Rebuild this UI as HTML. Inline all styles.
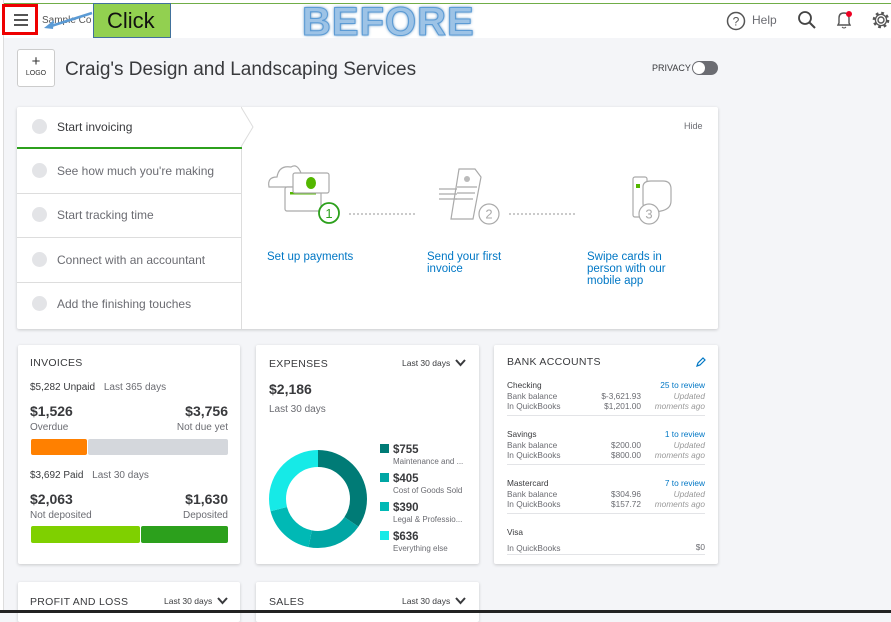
<!DOCTYPE html>
<html><head><meta charset="utf-8"><style>
*{box-sizing:border-box;margin:0;padding:0}
body{width:891px;height:613px;overflow:hidden;background:#f4f5f8;font-family:"Liberation Sans",sans-serif;color:#393a3d;position:relative}
.abs{position:absolute}
.card{position:absolute;background:#fff;box-shadow:0 1px 3px rgba(0,0,0,.18);border-radius:2px}
.lnk{color:#0077c5}
.g{color:#6b6c72}
.row{position:relative;height:36px;border-bottom:1px solid #e3e4e7;margin-bottom:13px}
</style></head><body>
<div class="abs" style="left:0;top:0;width:891px;height:38px;background:#fff"></div>
<div class="abs" style="left:0;top:3px;width:891px;height:1px;background:#70ad47"></div>
<div class="abs" style="left:0;top:0;width:4px;height:613px;background:#fff;border-right:1px solid #ddd"></div>
<!-- hamburger -->
<div class="abs" style="left:2px;top:4px;width:36px;height:31px;border:3px solid #e00"></div>
<div class="abs" style="left:14px;top:14px;width:14px;height:2px;background:#555;box-shadow:0 5px 0 #555,0 10px 0 #555"></div>
<div class="abs" style="left:42px;top:15px;font-size:10px;color:#555">Sample Co</div>
<svg class="abs" style="left:40px;top:10px" width="55" height="20"><path d="M52 3 L8 17" stroke="#5b9bd5" stroke-width="2.5"/><path d="M4 18 L14 10 L13 19Z" fill="#5b9bd5"/></svg>
<div class="abs" style="left:93px;top:3px;width:78px;height:35px;background:#92d050;border:1px solid #41719c;font-size:22px;color:#111;padding:4px 0 0 13px">Click</div>
<div class="abs" style="left:302px;top:0px;font-size:40px;font-weight:bold;color:#9dc3e6;letter-spacing:1px;text-shadow:0 0 3px #2e75b6,0 0 1px #2e75b6;-webkit-text-stroke:1px #5b9bd5">BEFORE</div>
<!-- top right icons -->
<svg class="abs" style="left:726px;top:11px" width="20" height="20"><circle cx="10" cy="10" r="8.5" stroke="#555" stroke-width="1.5" fill="none"/><text x="10" y="14.5" font-size="12" text-anchor="middle" fill="#555" font-family="Liberation Sans">?</text></svg>
<div class="abs" style="left:752px;top:13px;font-size:12px;color:#6b6c72">Help</div>
<svg class="abs" style="left:797px;top:10px" width="20" height="20"><circle cx="8" cy="8" r="6" stroke="#444" stroke-width="1.8" fill="none"/><path d="M12.5 12.5 L18 18" stroke="#444" stroke-width="2"/></svg>
<svg class="abs" style="left:834px;top:9px" width="20" height="22"><path d="M4 16 L5 14 L5 9 Q5 4 10 4 Q15 4 15 9 L15 14 L16 16Z" stroke="#555" stroke-width="1.4" fill="none"/><path d="M8 18 Q10 20 12 18" stroke="#555" fill="none"/><circle cx="15" cy="5" r="3" fill="#e02"/></svg>
<svg class="abs" style="left:871px;top:10px" width="20" height="20"><circle cx="10" cy="10" r="3" stroke="#555" stroke-width="1.4" fill="none"/><circle cx="10" cy="10" r="7" stroke="#555" stroke-width="2.6" fill="none" stroke-dasharray="2.7 2.8"/><circle cx="10" cy="10" r="5.6" stroke="#555" stroke-width="1.3" fill="none"/></svg>
<!-- company header -->
<div class="abs" style="left:17px;top:49px;width:38px;height:38px;border:1px solid #ccc;border-radius:3px;background:#fff;text-align:center;font-size:15px;line-height:14px;padding-top:5px;color:#333">+<div style="font-size:7px;line-height:10px">LOGO</div></div>
<div class="abs" style="left:65px;top:59px;font-size:19px;color:#393a3d">Craig's Design and Landscaping Services</div>
<div class="abs" style="left:652px;top:63px;font-size:9px;color:#393a3d">PRIVACY</div>
<div class="abs" style="left:692px;top:61px;width:26px;height:14px;border-radius:7px;background:#6b6c72"></div>
<div class="abs" style="left:693px;top:62px;width:12px;height:12px;border-radius:6px;background:#fff"></div>
<!-- setup card -->
<div class="card" style="left:17px;top:107px;width:701px;height:222px">
 <div class="abs" style="left:0;top:0;width:225px;height:222px;border-right:1px solid #ddd"></div>
 <div class="abs" style="left:0;top:40px;width:225px;height:2px;background:#2ca01c"></div>
 <div class="abs" style="left:0;top:86px;width:225px;height:1px;background:#ddd"></div>
 <div class="abs" style="left:0;top:130px;width:225px;height:1px;background:#ddd"></div>
 <div class="abs" style="left:0;top:175px;width:225px;height:1px;background:#ddd"></div>
 <svg class="abs" style="left:224px;top:0" width="14" height="42"><path d="M0 0 L12 20 L0 40" stroke="#ddd" fill="#fff"/></svg>
 <div style="position:absolute;left:15px;top:12px;font-size:12px;line-height:16px">
  <div style="height:44px"><span style="display:inline-block;width:15px;height:15px;border-radius:8px;background:#e3e4e7;vertical-align:-3px;margin-right:10px"></span>Start invoicing</div>
  <div style="height:44px;color:#6b6c72"><span style="display:inline-block;width:15px;height:15px;border-radius:8px;background:#e3e4e7;vertical-align:-3px;margin-right:10px"></span>See how much you're making</div>
  <div style="height:45px;color:#6b6c72"><span style="display:inline-block;width:15px;height:15px;border-radius:8px;background:#e3e4e7;vertical-align:-3px;margin-right:10px"></span>Start tracking time</div>
  <div style="height:44px;color:#6b6c72"><span style="display:inline-block;width:15px;height:15px;border-radius:8px;background:#e3e4e7;vertical-align:-3px;margin-right:10px"></span>Connect with an accountant</div>
  <div style="height:44px;color:#6b6c72"><span style="display:inline-block;width:15px;height:15px;border-radius:8px;background:#e3e4e7;vertical-align:-3px;margin-right:10px"></span>Add the finishing touches</div>
 </div>
 <div class="abs" style="left:667px;top:14px;font-size:9px;color:#6b6c72">Hide</div>
 <svg class="abs" style="left:250px;top:50px" width="420" height="70" fill="none" stroke="#aaa" stroke-width="1.2">
  <path d="M2 30 Q0 20 10 20 Q12 8 24 10 Q30 6 34 16 L34 30Z"/>
  <rect x="18" y="30" width="36" height="24" rx="2" fill="#fff"/><rect x="23" y="35" width="26" height="2.5" fill="#53b700" stroke="none"/>
  <rect x="26" y="16" width="36" height="20" rx="2" fill="#fff"/><ellipse cx="44" cy="26" rx="5" ry="6" fill="#53b700" stroke="none"/>
  <circle cx="62" cy="56" r="10" stroke="#2ca01c" stroke-width="1.8" fill="#fff"/><text x="62" y="61" font-size="13" text-anchor="middle" fill="#2ca01c" stroke="none" font-family="Liberation Sans">1</text>
  <path d="M82 57 H150" stroke-dasharray="2 2"/>
  <path d="M172 32 H190 M172 37 H190 M172 42 H190"/>
  <path d="M192 12 L208 12 L214 20 L206 62 L184 62Z"/><circle cx="200" cy="22" r="3" fill="#bbb" stroke="none"/><path d="M190 30 H210 M190 36 H208 M188 42 H206"/>
  <circle cx="222" cy="57" r="10" fill="#fff"/><text x="222" y="61.5" font-size="13" text-anchor="middle" fill="#aaa" stroke="none" font-family="Liberation Sans">2</text>
  <path d="M242 57 H310" stroke-dasharray="2 2"/>
  <rect x="366" y="20" width="14" height="40" rx="2"/><rect x="369" y="27" width="4" height="4" fill="#53b700" stroke="none"/>
  <path d="M376 30 Q376 24 384 24 L396 24 Q404 24 404 32 L404 44 Q404 52 394 54 L384 56 Q376 54 376 46Z" fill="#fff"/>
  <circle cx="382" cy="57" r="10" fill="#fff"/><text x="382" y="61.5" font-size="13" text-anchor="middle" fill="#aaa" stroke="none" font-family="Liberation Sans">3</text>
 </svg>
 <div class="abs lnk" style="left:250px;top:144px;font-size:11.5px;line-height:12px">Set up payments</div>
 <div class="abs lnk" style="left:410px;top:144px;font-size:11.5px;line-height:12px">Send your first<br>invoice</div>
 <div class="abs lnk" style="left:570px;top:144px;font-size:11.5px;line-height:12px">Swipe cards in<br>person with our<br>mobile app</div>
</div>
<!-- invoices -->
<div class="card" style="left:18px;top:345px;width:222px;height:219px;font-size:10px">
 <div class="abs" style="left:12px;top:12px;font-size:10.5px;letter-spacing:.3px">INVOICES</div>
 <div class="abs" style="left:12px;top:37px">$5,282 Unpaid <span class="g" style="margin-left:6px">Last 365 days</span></div>
 <div class="abs" style="left:12px;top:58px;font-size:14px;font-weight:bold">$1,526</div>
 <div class="abs g" style="left:12px;top:77px">Overdue</div>
 <div class="abs" style="right:12px;top:58px;font-size:14px;font-weight:bold">$3,756</div>
 <div class="abs g" style="right:12px;top:77px">Not due yet</div>
 <div class="abs" style="left:13px;top:94px;width:56px;height:16px;background:#ff8000;border-radius:2px"></div>
 <div class="abs" style="left:70px;top:94px;width:140px;height:16px;background:#d4d7dc;border-radius:2px"></div>
 <div class="abs" style="left:12px;top:125px">$3,692 Paid <span class="g" style="margin-left:6px">Last 30 days</span></div>
 <div class="abs" style="left:12px;top:146px;font-size:14px;font-weight:bold">$2,063</div>
 <div class="abs g" style="left:12px;top:165px">Not deposited</div>
 <div class="abs" style="right:12px;top:146px;font-size:14px;font-weight:bold">$1,630</div>
 <div class="abs g" style="right:12px;top:165px">Deposited</div>
 <div class="abs" style="left:13px;top:181px;width:109px;height:17px;background:#7fd000;border-radius:2px"></div>
 <div class="abs" style="left:123px;top:181px;width:87px;height:17px;background:#2ca01c;border-radius:2px"></div>
</div>
<!-- expenses -->
<div class="card" style="left:256px;top:345px;width:223px;height:219px;font-size:10px">
 <div class="abs" style="left:13px;top:13px;font-size:10.5px;letter-spacing:.3px">EXPENSES</div>
 <div class="abs" style="left:146px;top:13px;font-size:8.5px">Last 30 days</div>
 <svg class="abs" style="left:199px;top:14px" width="11" height="8"><path d="M1 1 L5.5 6 L10 1" stroke="#393a3d" stroke-width="2" fill="none"/></svg>
 <div class="abs" style="left:13px;top:36px;font-size:14px;font-weight:bold">$2,186</div>
 <div class="abs g" style="left:13px;top:59px">Last 30 days</div>
 <svg class="abs" style="left:12px;top:104px" width="100" height="100" viewBox="0 0 100 100">
  <g transform="rotate(-90 50 50)" fill="none" stroke-width="17">
   <circle cx="50" cy="50" r="40.5" stroke="#007b76" stroke-dasharray="87.8 300"/>
   <circle cx="50" cy="50" r="40.5" stroke="#00a6a4" stroke-dasharray="0 87.8 47.1 300"/>
   <circle cx="50" cy="50" r="40.5" stroke="#00b9b5" stroke-dasharray="0 134.9 45.4 300"/>
   <circle cx="50" cy="50" r="40.5" stroke="#16eae7" stroke-dasharray="0 180.3 74.2 300"/>
  </g>
 </svg>
 <div class="abs" style="left:124px;top:99px;line-height:11px">
  <div style="height:29px"><span style="display:inline-block;width:9px;height:9px;background:#007b76;margin-right:4px"></span><b style="font-size:11.5px">$755</b><div class="g" style="font-size:8px;margin-left:13px">Maintenance and ...</div></div>
  <div style="height:29px"><span style="display:inline-block;width:9px;height:9px;background:#00a6a4;margin-right:4px"></span><b style="font-size:11.5px">$405</b><div class="g" style="font-size:8px;margin-left:13px">Cost of Goods Sold</div></div>
  <div style="height:29px"><span style="display:inline-block;width:9px;height:9px;background:#00b9b5;margin-right:4px"></span><b style="font-size:11.5px">$390</b><div class="g" style="font-size:8px;margin-left:13px">Legal &amp; Professio...</div></div>
  <div style="height:29px"><span style="display:inline-block;width:9px;height:9px;background:#16eae7;margin-right:4px"></span><b style="font-size:11.5px">$636</b><div class="g" style="font-size:8px;margin-left:13px">Everything else</div></div>
 </div>
</div>
<!-- bank -->
<div class="card" style="left:494px;top:345px;width:224px;height:219px;font-size:8.3px;line-height:10.5px">
 <div class="abs" style="left:13px;top:12px;font-size:10.5px;letter-spacing:.3px">BANK ACCOUNTS</div>
 <svg class="abs" style="left:201px;top:12px" width="11" height="11"><path d="M2 9 L3 6 L8 1 L10 3 L5 8Z" stroke="#0077c5" stroke-width="1.2" fill="none"/></svg>
 <div class="abs" style="left:13px;top:35px;width:198px">
  <div class="row"><span>Checking</span><span class="abs lnk" style="right:0;top:0">25 to review</span><br><span class="g">Bank balance<br>In QuickBooks</span><span class="abs g" style="right:64px;top:10.5px;text-align:right">$-3,621.93<br>$1,201.00</span><span class="abs" style="right:0;top:10.5px;text-align:right;font-style:italic;color:#999">Updated<br>moments ago</span></div>
  <div class="row"><span>Savings</span><span class="abs lnk" style="right:0;top:0">1 to review</span><br><span class="g">Bank balance<br>In QuickBooks</span><span class="abs g" style="right:64px;top:10.5px;text-align:right">$200.00<br>$800.00</span><span class="abs" style="right:0;top:10.5px;text-align:right;font-style:italic;color:#999">Updated<br>moments ago</span></div>
  <div class="row"><span>Mastercard</span><span class="abs lnk" style="right:0;top:0">7 to review</span><br><span class="g">Bank balance<br>In QuickBooks</span><span class="abs g" style="right:64px;top:10.5px;text-align:right">$304.96<br>$157.72</span><span class="abs" style="right:0;top:10.5px;text-align:right;font-style:italic;color:#999">Updated<br>moments ago</span></div>
  <div class="row" style="height:28px"><span>Visa</span><br><span class="g" style="line-height:20px">In QuickBooks</span><span class="abs g" style="right:0;top:15px">$0</span></div>
 </div>
</div>
<!-- bottom row -->
<div class="card" style="left:18px;top:582px;width:222px;height:40px">
 <div class="abs" style="left:12px;top:14px;font-size:10.5px;letter-spacing:.3px">PROFIT AND LOSS</div>
 <div class="abs" style="left:146px;top:14px;font-size:8.5px">Last 30 days</div>
 <svg class="abs" style="left:199px;top:15px" width="11" height="8"><path d="M1 1 L5.5 6 L10 1" stroke="#393a3d" stroke-width="2" fill="none"/></svg>
</div>
<div class="card" style="left:256px;top:582px;width:223px;height:40px">
 <div class="abs" style="left:13px;top:14px;font-size:10.5px;letter-spacing:.3px">SALES</div>
 <div class="abs" style="left:146px;top:14px;font-size:8.5px">Last 30 days</div>
 <svg class="abs" style="left:199px;top:15px" width="11" height="8"><path d="M1 1 L5.5 6 L10 1" stroke="#393a3d" stroke-width="2" fill="none"/></svg>
</div>
<div class="abs" style="left:0;top:610px;width:891px;height:3px;background:#222"></div>
</body></html>
